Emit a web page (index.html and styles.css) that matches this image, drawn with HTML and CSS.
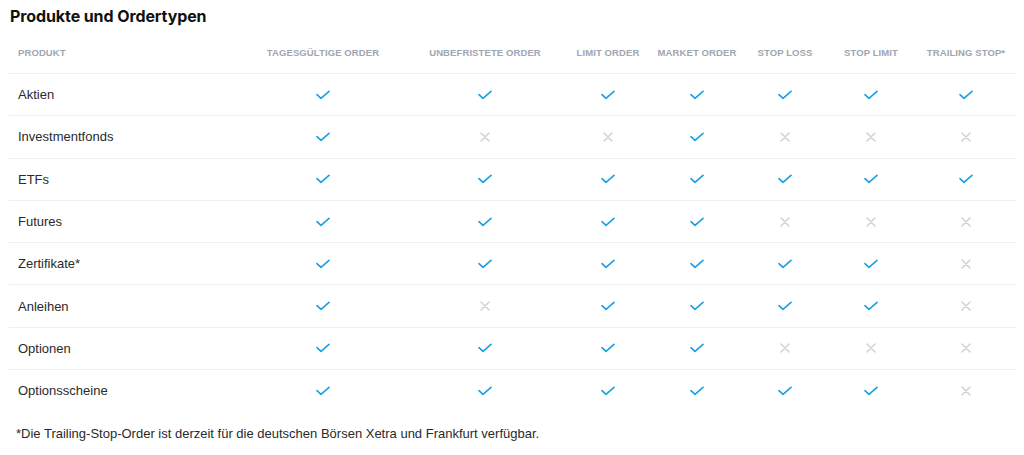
FILE: index.html
```html
<!DOCTYPE html>
<html lang="de">
<head>
<meta charset="utf-8">
<title>Produkte und Ordertypen</title>
<link rel="stylesheet" href="styles.css">
</head>
<body>
<svg width="0" height="0" class="defs">
  <defs>
    <symbol id="ok" viewBox="0 0 14 10"><path d="M1 4.6 L5 8.4 L13 1.4" fill="none" stroke="#1a9fe0" stroke-width="1.6" stroke-linecap="round" stroke-linejoin="round"/></symbol>
    <symbol id="no" viewBox="0 0 10 10"><path d="M1 1 L9 9 M9 1 L1 9" fill="none" stroke="#cdd2d8" stroke-width="1.5" stroke-linecap="round"/></symbol>
  </defs>
</svg>
<h2 class="title">Produkte und Ordertypen</h2>
<div class="table">
  <div class="row head">
    <div class="cell name">PRODUKT</div>
    <div class="cell">TAGESGÜLTIGE ORDER</div>
    <div class="cell">UNBEFRISTETE ORDER</div>
    <div class="cell">LIMIT ORDER</div>
    <div class="cell">MARKET ORDER</div>
    <div class="cell">STOP LOSS</div>
    <div class="cell">STOP LIMIT</div>
    <div class="cell">TRAILING STOP*</div>
  </div>
  <div class="row">
    <div class="cell name">Aktien</div>
    <div class="cell"><svg class="ic-ok"><use href="#ok"/></svg></div>
    <div class="cell"><svg class="ic-ok"><use href="#ok"/></svg></div>
    <div class="cell"><svg class="ic-ok"><use href="#ok"/></svg></div>
    <div class="cell"><svg class="ic-ok"><use href="#ok"/></svg></div>
    <div class="cell"><svg class="ic-ok"><use href="#ok"/></svg></div>
    <div class="cell"><svg class="ic-ok"><use href="#ok"/></svg></div>
    <div class="cell"><svg class="ic-ok"><use href="#ok"/></svg></div>
  </div>
  <div class="row">
    <div class="cell name">Investmentfonds</div>
    <div class="cell"><svg class="ic-ok"><use href="#ok"/></svg></div>
    <div class="cell"><svg class="ic-no"><use href="#no"/></svg></div>
    <div class="cell"><svg class="ic-no"><use href="#no"/></svg></div>
    <div class="cell"><svg class="ic-ok"><use href="#ok"/></svg></div>
    <div class="cell"><svg class="ic-no"><use href="#no"/></svg></div>
    <div class="cell"><svg class="ic-no"><use href="#no"/></svg></div>
    <div class="cell"><svg class="ic-no"><use href="#no"/></svg></div>
  </div>
  <div class="row">
    <div class="cell name">ETFs</div>
    <div class="cell"><svg class="ic-ok"><use href="#ok"/></svg></div>
    <div class="cell"><svg class="ic-ok"><use href="#ok"/></svg></div>
    <div class="cell"><svg class="ic-ok"><use href="#ok"/></svg></div>
    <div class="cell"><svg class="ic-ok"><use href="#ok"/></svg></div>
    <div class="cell"><svg class="ic-ok"><use href="#ok"/></svg></div>
    <div class="cell"><svg class="ic-ok"><use href="#ok"/></svg></div>
    <div class="cell"><svg class="ic-ok"><use href="#ok"/></svg></div>
  </div>
  <div class="row">
    <div class="cell name">Futures</div>
    <div class="cell"><svg class="ic-ok"><use href="#ok"/></svg></div>
    <div class="cell"><svg class="ic-ok"><use href="#ok"/></svg></div>
    <div class="cell"><svg class="ic-ok"><use href="#ok"/></svg></div>
    <div class="cell"><svg class="ic-ok"><use href="#ok"/></svg></div>
    <div class="cell"><svg class="ic-no"><use href="#no"/></svg></div>
    <div class="cell"><svg class="ic-no"><use href="#no"/></svg></div>
    <div class="cell"><svg class="ic-no"><use href="#no"/></svg></div>
  </div>
  <div class="row">
    <div class="cell name">Zertifikate*</div>
    <div class="cell"><svg class="ic-ok"><use href="#ok"/></svg></div>
    <div class="cell"><svg class="ic-ok"><use href="#ok"/></svg></div>
    <div class="cell"><svg class="ic-ok"><use href="#ok"/></svg></div>
    <div class="cell"><svg class="ic-ok"><use href="#ok"/></svg></div>
    <div class="cell"><svg class="ic-ok"><use href="#ok"/></svg></div>
    <div class="cell"><svg class="ic-ok"><use href="#ok"/></svg></div>
    <div class="cell"><svg class="ic-no"><use href="#no"/></svg></div>
  </div>
  <div class="row">
    <div class="cell name">Anleihen</div>
    <div class="cell"><svg class="ic-ok"><use href="#ok"/></svg></div>
    <div class="cell"><svg class="ic-no"><use href="#no"/></svg></div>
    <div class="cell"><svg class="ic-ok"><use href="#ok"/></svg></div>
    <div class="cell"><svg class="ic-ok"><use href="#ok"/></svg></div>
    <div class="cell"><svg class="ic-ok"><use href="#ok"/></svg></div>
    <div class="cell"><svg class="ic-ok"><use href="#ok"/></svg></div>
    <div class="cell"><svg class="ic-no"><use href="#no"/></svg></div>
  </div>
  <div class="row">
    <div class="cell name">Optionen</div>
    <div class="cell"><svg class="ic-ok"><use href="#ok"/></svg></div>
    <div class="cell"><svg class="ic-ok"><use href="#ok"/></svg></div>
    <div class="cell"><svg class="ic-ok"><use href="#ok"/></svg></div>
    <div class="cell"><svg class="ic-ok"><use href="#ok"/></svg></div>
    <div class="cell"><svg class="ic-no"><use href="#no"/></svg></div>
    <div class="cell"><svg class="ic-no"><use href="#no"/></svg></div>
    <div class="cell"><svg class="ic-no"><use href="#no"/></svg></div>
  </div>
  <div class="row last">
    <div class="cell name">Optionsscheine</div>
    <div class="cell"><svg class="ic-ok"><use href="#ok"/></svg></div>
    <div class="cell"><svg class="ic-ok"><use href="#ok"/></svg></div>
    <div class="cell"><svg class="ic-ok"><use href="#ok"/></svg></div>
    <div class="cell"><svg class="ic-ok"><use href="#ok"/></svg></div>
    <div class="cell"><svg class="ic-ok"><use href="#ok"/></svg></div>
    <div class="cell"><svg class="ic-ok"><use href="#ok"/></svg></div>
    <div class="cell"><svg class="ic-no"><use href="#no"/></svg></div>
  </div>
</div>
<p class="note">*Die Trailing-Stop-Order ist derzeit für die deutschen Börsen Xetra und Frankfurt verfügbar.</p>
</body>
</html>
```
FILE: styles.css
```css
html, body {
  margin: 0;
  padding: 0;
  background: #ffffff;
}
body {
  padding: 0 6px 0 9px;
  font-family: "Liberation Sans", Arial, sans-serif;
  color: #2a2a2a;
}
.defs {
  position: absolute;
  width: 0;
  height: 0;
  overflow: hidden;
}
.title {
  margin: 4px 0 0 1px;
  font-family: "Inter", "Liberation Sans", sans-serif;
  font-size: 16px;
  font-weight: 700;
  line-height: 24px;
  color: #111111;
  letter-spacing: -0.1px;
}
.table {
  width: 1008px;
}
.row {
  display: grid;
  grid-template-columns: 232px 164px 160px 86px 92px 84px 88px 102px;
  height: 41.3px;
  border-bottom: 1px solid #eef0f2;
  align-items: center;
  font-size: 13px;
}
.row.last {
  border-bottom: none;
}
.row.head {
  height: 45px;
  align-items: start;
}
.head .cell {
  padding-top: 19px;
  font-size: 9.5px;
  font-weight: 700;
  color: #9ea6b2;
  letter-spacing: 0.1px;
  line-height: 12px;
}
.cell {
  display: flex;
  justify-content: center;
  align-items: center;
  white-space: nowrap;
}
.cell.name {
  justify-content: flex-start;
  padding-left: 9px;
}
.ic-ok {
  width: 14px;
  height: 10px;
}
.ic-no {
  width: 10px;
  height: 10px;
}
.note {
  margin: 14px 0 0 7px;
  font-size: 13px;
  line-height: 18px;
  color: #2a2a2a;
}
```
